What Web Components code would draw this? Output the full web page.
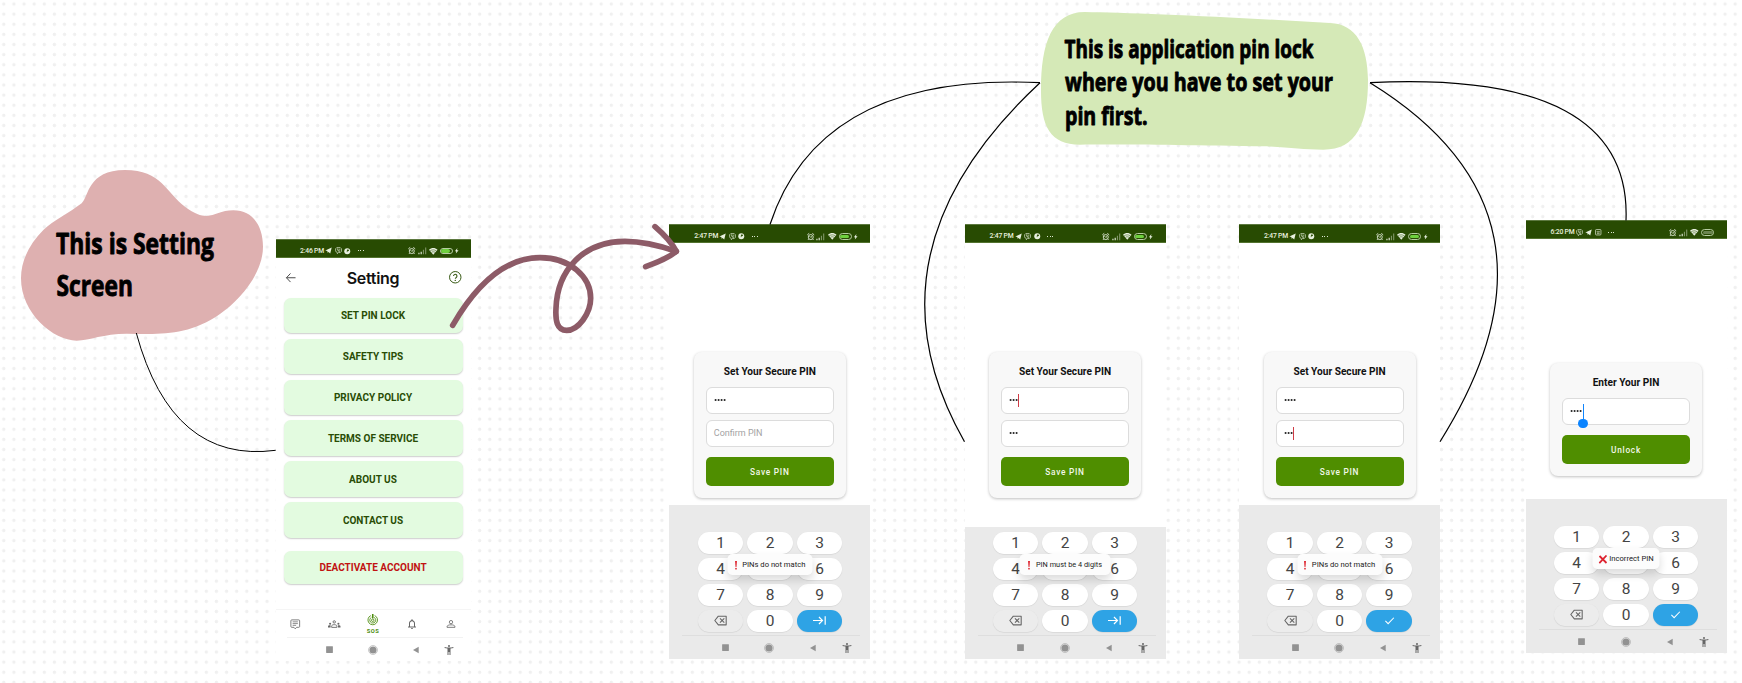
<!DOCTYPE html>
<html lang="en">
<head>
<meta charset="utf-8">
<title>App flow board</title>
<style>
html,body{margin:0;padding:0;background:#fff}
body{width:1742px;height:683px;overflow:hidden;font-family:Roboto,"Liberation Sans",sans-serif}
</style>
</head>
<body>
<flow-board></flow-board>
<script>
const define = (name, html) => {
  customElements.define(name, class extends HTMLElement {
    connectedCallback() {
      if (this.shadowRoot) return;
      const root = this.attachShadow({ mode: 'open' });
      const t = document.createElement('template');
      t.innerHTML = typeof html === 'function' ? html(this) : html;
      root.append(t.content.cloneNode(true));
    }
  });
};
const A = (el, n, d = '') => el.getAttribute(n) ?? d;

const ICONS = {
  back: '<path d="M22 12H3M11.500 3 3 12l8.500 9" fill="none" stroke="currentColor" stroke-width="2"/>',
  help: '<circle cx="12" cy="12" r="11" fill="none" stroke="currentColor" stroke-width="1.900"/><path d="M8.700 9.700a3.300 3.300 0 1 1 5.200 2.700c-1.300.9-1.900 1.400-1.900 2.700" fill="none" stroke="currentColor" stroke-width="2"/><circle cx="12" cy="18" r="1.300"/>',
  chat: '<path d="M20 2H4a2 2 0 0 0-2 2v13a2 2 0 0 0 2 2h5l3 3.500 3-3.500h5a2 2 0 0 0 2-2V4a2 2 0 0 0-2-2z" fill="none" stroke="currentColor" stroke-width="1.900"/><path d="M6 6.500h12M6 10.500h12M6 14.500h8" stroke="currentColor" stroke-width="1.700"/>',
  group: '<g fill="none" stroke="currentColor" stroke-width="1.700"><circle cx="12" cy="7.500" r="2.300"/><path d="M7 18v-2.200c0-2 2-3 5-3s5 1 5 3V18z"/></g><circle cx="4" cy="11" r="2"/><circle cx="20" cy="11" r="2"/><path d="M0 18v-1.700C0 14.500 2 14 5 14.200 5 15 5 18 5 18zM24 18v-1.700c0-1.800-2-2.300-5-2.100V18z"/>',
  sos: '<g fill="none" stroke="currentColor" stroke-width="1.800"><path d="M8 3.300a10 10 0 1 0 8 0"/><path d="M9 7.200a6.200 6.200 0 1 0 6 0"/><circle cx="12" cy="13" r="2.600"/><path d="M12 0v9" stroke-width="3.300"/></g>',
  bell: '<path d="M12 22a2 2 0 0 0 2-2h-4a2 2 0 0 0 2 2zm6-6v-5c0-3.070-1.630-5.640-4.500-6.320V4a1.500 1.500 0 0 0-3 0v.68C7.640 5.360 6 7.920 6 11v5l-2 2v1h16v-1l-2-2zm-2 1H8v-6c0-2.480 1.510-4.500 4-4.500s4 2.020 4 4.500v6z"/>',
  person: '<g fill="none" stroke="currentColor" stroke-width="2"><circle cx="12" cy="7.500" r="4"/><path d="M2.500 20v-1.500c0-3 4-4.500 9.500-4.500s9.500 1.500 9.500 4.500V20z"/></g>',
  square: '<rect x="3" y="3" width="18" height="18" rx="1"/>',
  home: '<circle cx="12" cy="12" r="10.700" fill="none" stroke="currentColor" stroke-width="1.200"/><circle cx="12" cy="12" r="8.600"/>',
  tri: '<path d="M20 2.500v19L3 12z"/>',
  access: '<path d="M20.500 6c-2.610.7-5.670 1-8.500 1s-5.890-.3-8.500-1L3 8c1.860.5 4 .83 6 1v13h2v-6h2v6h2V9c2-.17 4.140-.5 6-1l-.5-2zM12 6a2 2 0 1 0 0-4 2 2 0 0 0 0 4z"/>',
  erase: '<path d="M8 4h14.500v16H8L1.500 12z" fill="none" stroke="currentColor" stroke-width="2" stroke-linejoin="round"/><path d="m11 8 8 8M19 8l-8 8" stroke="currentColor" stroke-width="2"/>',
  next: '<path d="M0 12h17M11 5.500l6.500 6.500-6.500 6.500M22.500 4v16" fill="none" stroke="currentColor" stroke-width="2.200"/>',
  check: '<path d="m3 13 6 6L21.500 6" fill="none" stroke="currentColor" stroke-width="2.200"/>',
  plane: '<path d="M1 12 23 2l-5 20-6-5-3 3-1-6z"/>',
  viber: '<path d="M6 2h12l4 4v9l-4 4h-6l-4 4v-4l-4-2-2-4V6z" fill="none" stroke="currentColor" stroke-width="2.200"/><path d="M8 6c0 5 3 9 8 10l1-2-3-2-2 1-2-3 1-1-1-3zM13 6c3 0 4 2 4 5" fill="none" stroke="currentColor" stroke-width="1.800"/>',
  globe: '<circle cx="12" cy="12" r="11"/><path d="M13 5c4 0 6 3 5 6l-5 1-2 5-1-6z" fill="#284b02"/>',
  box: '<rect x="2" y="2" width="20" height="20" rx="3" fill="none" stroke="currentColor" stroke-width="2.500"/><path d="M6 9h12M7 14h10M7 17h10" stroke="currentColor" stroke-width="2"/>',
  alarm: '<g fill="none" stroke="currentColor" stroke-width="2.800"><circle cx="12" cy="13" r="8"/><path d="m1 6 6-5M23 6l-6-5M8 10l4 4 4-3M6 19l-3 3M18 19l3 3"/></g>',
  signal: '<path d="M1 18h3v4H1zM7 15h3v7H7z"/><path d="M13 10h3v12h-3zM19 4h3v18h-3z" opacity=".45"/>',
  wifi: '<path d="M12 22 0 8c7-6.500 17-6.500 24 0z"/><path d="M3 11c6-4 12-4 18 0M7 15c3-2 7-2 10 0" fill="none" stroke="#284b02" stroke-width="1.500"/>',
  bolt: '<path d="M15 0 4 14h6l-2 10L20 10h-7z"/>'
};

define('app-icon', el => `<style>:host{display:block;width:${A(el,'size')}px;height:${A(el,'size')}px;flex:none}svg{display:block;width:100%;height:100%;overflow:visible}</style>
<svg viewBox="0 0 24 24" fill="currentColor">${ICONS[A(el,'name')]}</svg>`);

define('status-bar', el => {
  const plain = el.hasAttribute('plain');
  return `<style>
:host{display:flex;box-sizing:border-box;height:19px;background:#284b02;color:#e8f0df;align-items:center;border-top:1px solid #5d7940;border-bottom:1px solid #53732f;padding:5px ${A(el,'pr',12)}px 0 ${A(el,'pl',25)}px;font:500 6.800px/8px Roboto,sans-serif}
time{width:24px;white-space:nowrap;letter-spacing:-.2px}
.l{display:flex;gap:2.500px;align-items:center;margin-left:1px}
.dots{margin-left:7px;width:8px;display:flex;gap:1.700px}
i{width:1px;height:1px;background:#dce6d0}
.r{display:flex;gap:2.300px;align-items:center;margin-left:auto}
.b{box-sizing:border-box;width:13px;height:6.500px;border:1px solid #b7cda2;border-radius:3.500px;display:flex;padding:.5px}
.b span{flex:${plain?'1':'0 0 9px'};background:${plain?'#6b8550':'#6fd03f'};border-radius:2px}
</style><time>${A(el,'time')}</time>
<div class="l">${plain?'<app-icon name="viber" size="7"></app-icon><app-icon name="plane" size="7"></app-icon><app-icon name="box" size="6.500"></app-icon>':'<app-icon name="plane" size="7"></app-icon><app-icon name="viber" size="7"></app-icon><app-icon name="globe" size="6.500"></app-icon>'}</div>
<div class="dots"><i></i><i></i><i></i></div>
<div class="r"><app-icon name="alarm" size="7.500"></app-icon><app-icon name="signal" size="9"></app-icon><app-icon name="wifi" size="8.500"></app-icon><div class="b"><span></span></div>${plain?'':'<app-icon name="bolt" size="5.500" style="margin-left:-1px"></app-icon>'}</div>`;
});

define('system-nav', `<style>
:host{display:grid;grid-template-columns:var(--nav-cols,44px 44px 44px 24px);box-sizing:border-box;justify-items:center;align-items:center;height:24px;border-top:1px solid rgba(0,0,0,.05);color:#929292;margin:0 10px 0 13px;padding-left:21px}
</style><app-icon name="square" size="9"></app-icon><app-icon name="home" size="10"></app-icon><app-icon name="tri" size="8"></app-icon><app-icon name="access" size="12" style="color:#666"></app-icon>`);

define('setting-button', el => `<style>
:host{display:flex;align-items:center;justify-content:center;box-sizing:border-box;height:35.200px;padding-top:2px;border-radius:7px;background:#e3fbe0;box-shadow:0 1px 1.500px rgba(0,0,0,.2);font:700 10px/12px Roboto,sans-serif;color:${el.hasAttribute('danger')?'#c11212':'#294d05'}}
</style><slot></slot>`);

define('setting-screen', `<style>
:host{display:flex;flex-direction:column;width:195px;height:422px;background:#fff}
header{display:grid;grid-template-columns:31px 1fr 31px;align-items:center;justify-items:center;height:40.500px}
h1{margin:0;font:600 16px/20px Inter,sans-serif;letter-spacing:-.3px;color:#111}
main{display:flex;flex-direction:column;gap:5.800px;margin:0 8px}
nav{display:grid;grid-template-columns:repeat(5,1fr);justify-items:center;align-items:center;height:27.500px;margin-top:25.500px;border-top:1px solid #f5f5f5;color:#666}
.sos{display:flex;flex-direction:column;align-items:center;color:#4b8b0c;font:700 5.800px/6px Roboto,sans-serif;letter-spacing:.5px;gap:2px}
</style><status-bar time="2:46 PM" pl="24.500" pr="11"></status-bar>
<header><app-icon name="back" size="11.500" style="color:#444"></app-icon><h1>Setting</h1><app-icon name="help" size="12.500" style="color:#365812"></app-icon></header>
<main><setting-button>SET PIN LOCK</setting-button><setting-button>SAFETY TIPS</setting-button><setting-button>PRIVACY POLICY</setting-button><setting-button>TERMS OF SERVICE</setting-button><setting-button>ABOUT US</setting-button><setting-button>CONTACT US</setting-button><setting-button danger style="margin-top:7.500px;height:33px">DEACTIVATE ACCOUNT</setting-button></main>
<nav><app-icon name="chat" size="10.500"></app-icon><app-icon name="group" size="12.500"></app-icon><div class="sos"><app-icon name="sos" size="11.500"></app-icon><span>SOS</span></div><app-icon name="bell" size="12"></app-icon><app-icon name="person" size="10"></app-icon></nav>
<system-nav style="margin-right:8px;margin-left:11px;--nav-cols:43.500px 43.500px 43px 22px"></system-nav>`);

define('pin-field', el => {
  const n = +A(el,'dots',0), c = A(el,'caret');
  return `<style>
:host{display:flex;align-items:center;box-sizing:border-box;height:27px;border:1px solid #dcdcdc;border-radius:6px;background:#fff;padding:0 7px;font:400 9px/12px Roboto,sans-serif;color:#a3a3a3}
svg{display:block}
.c{width:1px;height:13px;background:#cf3b45;position:relative;margin-left:0}
.c.blue{background:#1185fb;height:16px;top:1px;margin-left:.5px}
.c.blue::after{content:"";position:absolute;left:-4.200px;top:14.500px;width:9.400px;height:9.400px;border-radius:50%;background:#0b84ff}
</style>${n?`<svg width="${n*3}" height="4" fill="#222">${Array.from({length:n},(_,i)=>`<circle cx="${1.6+i*3}" cy="2" r="1.050"/>`).join('')}</svg>`:''}${c?`<div class="c ${c}"></div>`:''}<slot></slot>`;
});

define('pin-card', el => `<style>
:host{display:flex;flex-direction:column;box-sizing:border-box;width:152px;background:#f8f8f8;border-radius:8px;box-shadow:0 1px 3px rgba(0,0,0,.25);padding:13.500px 12px 12px}
h2{margin:0 0 8.500px;text-align:center;font:700 10.150px/13px Roboto,sans-serif;color:#111}
.f{display:flex;flex-direction:column;gap:6px}
button{all:unset;box-sizing:border-box;height:29.500px;margin-top:10px;border-radius:5px;background:#4f8e00;color:#f2f8ea;text-align:center;font:500 8.300px/30px Roboto,sans-serif;letter-spacing:.75px}
</style><h2>${A(el,'heading')}</h2><div class="f"><slot></slot></div><button>${A(el,'action')}</button>`);

define('key-pad', el => `<style>
:host{display:flex;flex-direction:column;justify-content:flex-end;box-sizing:border-box;background:#eaeaea;position:relative;height:${A(el,'h',154)}px}
.g{display:grid;grid-template-columns:repeat(3,45.500px);grid-auto-rows:21.600px;column-gap:4px;row-gap:4.250px;margin:0 auto 3.700px;padding-left:.4px}
.k{display:flex;align-items:center;justify-content:center;border-radius:11px;background:#fff;box-shadow:0 .5px 1px rgba(0,0,0,.13);font:400 15.500px/20px Roboto,sans-serif;color:#444}
.e{background:#ececec;color:#666}.n{background:#2ea3e5;color:#fff}
.t{position:absolute;left:50%;bottom:84px;transform:translateX(-50%);display:flex;align-items:center;box-sizing:border-box;justify-content:center;width:${A(el,'tw',85)}px;height:21.500px;padding-top:1px;background:#fcfcfc;border-radius:5px;box-shadow:0 5px 9px rgba(0,0,0,.14);font:400 ${A(el,'fs','7.650')}px/10px Roboto,sans-serif;color:#222;white-space:nowrap;gap:${el.hasAttribute('cross')?2:5}px}
svg{display:block}
</style><div class="g">${[1,2,3,4,5,6,7,8,9].map(k=>`<div class="k">${k===5?'':k}</div>`).join('')}<div class="k e"><app-icon name="erase" size="13"></app-icon></div><div class="k">0</div><div class="k n"><app-icon name="${A(el,'go')}" size="${A(el,'go')==='next'?13:11}"></app-icon></div></div>
<system-nav></system-nav>
<div class="t">${el.hasAttribute('cross')?'<svg width="9" height="9" viewBox="0 0 9 9"><path d="M1 1 8 8M8 .5.8 8.200" stroke="#dd2330" stroke-width="1.800"/></svg>':'<svg width="3" height="9" viewBox="0 0 3 9"><path d="M.5 0h2L2 6H1z" fill="#e0303a"/><circle cx="1.500" cy="7.700" r=".9" fill="#e0303a"/></svg>'}<span>${A(el,'toast')}</span></div>`);

define('pin-screen', `<style>
:host{display:flex;flex-direction:column;width:201px;height:435px;background:#fff}
::slotted(pin-card){margin:var(--card-top,108.500px) auto 0}
::slotted(key-pad){margin-top:auto}
</style><slot></slot>`);

define('hand-note', el => {
  const lines = JSON.parse(A(el,'lines'));
  return `<style>:host{display:block}svg{display:block;overflow:visible}text{font:700 ${A(el,'size')}px "Open Sans",sans-serif;fill:#000;stroke:#000;stroke-width:.9px;stroke-linejoin:round}</style>
<svg width="${A(el,'w')}" height="${A(el,'h')}"><path transform="scale(.33333)" fill="${A(el,'fill')}" d="${A(el,'shape')}"/>${lines.map(l=>`<text x="${l[1]}" y="${l[2]}" textLength="${l[3]}" lengthAdjust="spacingAndGlyphs">${l[0]}</text>`).join('')}</svg>`;
});

define('flow-board', `<style>
:host{display:block;position:relative;width:1742px;height:683px;overflow:hidden;background:#fff radial-gradient(circle,#f0f0f0 0 1.500px,transparent 2px) -1.270px -1.070px/10.137px 10.137px}
:host>*{position:absolute}
svg{left:0;top:0;pointer-events:none}
</style>
<setting-screen style="left:275.500px;top:239px"></setting-screen>
<pin-screen style="left:669.300px;top:224.300px"><status-bar time="2:47 PM"></status-bar><pin-card heading="Set Your Secure PIN" action="Save PIN"><pin-field dots="4"></pin-field><pin-field>Confirm PIN</pin-field></pin-card><key-pad go="next" toast="PINs do not match"></key-pad></pin-screen>
<pin-screen style="left:964.500px;top:224.300px"><status-bar time="2:47 PM"></status-bar><pin-card heading="Set Your Secure PIN" action="Save PIN"><pin-field dots="3" caret="red"></pin-field><pin-field dots="3"></pin-field></pin-card><key-pad h="132" tw="91" fs="7.350" go="next" toast="PIN must be 4 digits"></key-pad></pin-screen>
<pin-screen style="left:1239px;top:224.300px"><status-bar time="2:47 PM"></status-bar><pin-card heading="Set Your Secure PIN" action="Save PIN"><pin-field dots="4"></pin-field><pin-field dots="3" caret="red"></pin-field></pin-card><key-pad go="check" toast="PINs do not match"></key-pad></pin-screen>
<pin-screen style="left:1525.500px;top:220.300px;height:433px;--card-top:123.500px"><status-bar plain time="6:20 PM" pr="12.500"></status-bar><pin-card heading="Enter Your PIN" action="Unlock"><pin-field dots="4" caret="blue"></pin-field></pin-card><key-pad go="check" cross tw="67" toast="Incorrect PIN"></key-pad></pin-screen>
<hand-note style="left:0;top:150px" w="270" h="200" size="29" fill="#deb0b0" lines='[["This is Setting",56,104,158],["Screen",56.500,146,76.500]]' shape="M63 385C63 330 90 280 130 240C160 212 210 187 245 160C267 140 262 60 375 60C485 60 500 130 555 170C630 225 640 181 700 181C760 181 789 230 789 290C789 370 720 450 660 492C560 560 480 552 380 551C310 551 270 571 230 572C160 572 63 490 63 385Z"></hand-note>
<hand-note style="left:1020px;top:0" w="370" h="160" size="24.500" fill="#d5e9b7" lines='[["This is application pin lock",44.500,57.500,249],["where you have to set your",45,91.300,268],["pin first.",45,125,82.500]]' shape="M63 270C63 130 95 36 195 36C330 38 650 52 930 69C1010 72 1043 140 1044 240C1044 370 1010 449 910 449C850 449 810 442 740 439C500 436 300 432 180 434C90 434 63 380 63 270Z"></hand-note>
<svg width="1742" height="683" fill="none" stroke="#000" stroke-width="1.200">
<path d="M136.300 333Q172 464 275.700 450.300" stroke-width="1"/>
<path d="M770 224.500Q820 72 1040 82.700"/>
<path d="M1040 82.700Q857 253 964.500 441.700"/>
<path d="M1370 82.700Q1583 214 1440 441.700"/>
<path d="M1370 82.700Q1632 70 1626 220.500"/>
<g transform="translate(440 210) scale(.33333)" stroke="#8d5b67" stroke-width="17" stroke-linecap="round" stroke-linejoin="round"><path d="M38 346C120 205 205 143 300 143C390 143 452 200 452 265C452 310 415 361 380 361C350 361 346 330 348 295C352 180 430 94 555 94C610 94 660 107 709 124"/><path d="M645 50C680 80 695 98 709 124C690 140 650 158 617 170"/></g>
</svg>`);
</script>
</body>
</html>
